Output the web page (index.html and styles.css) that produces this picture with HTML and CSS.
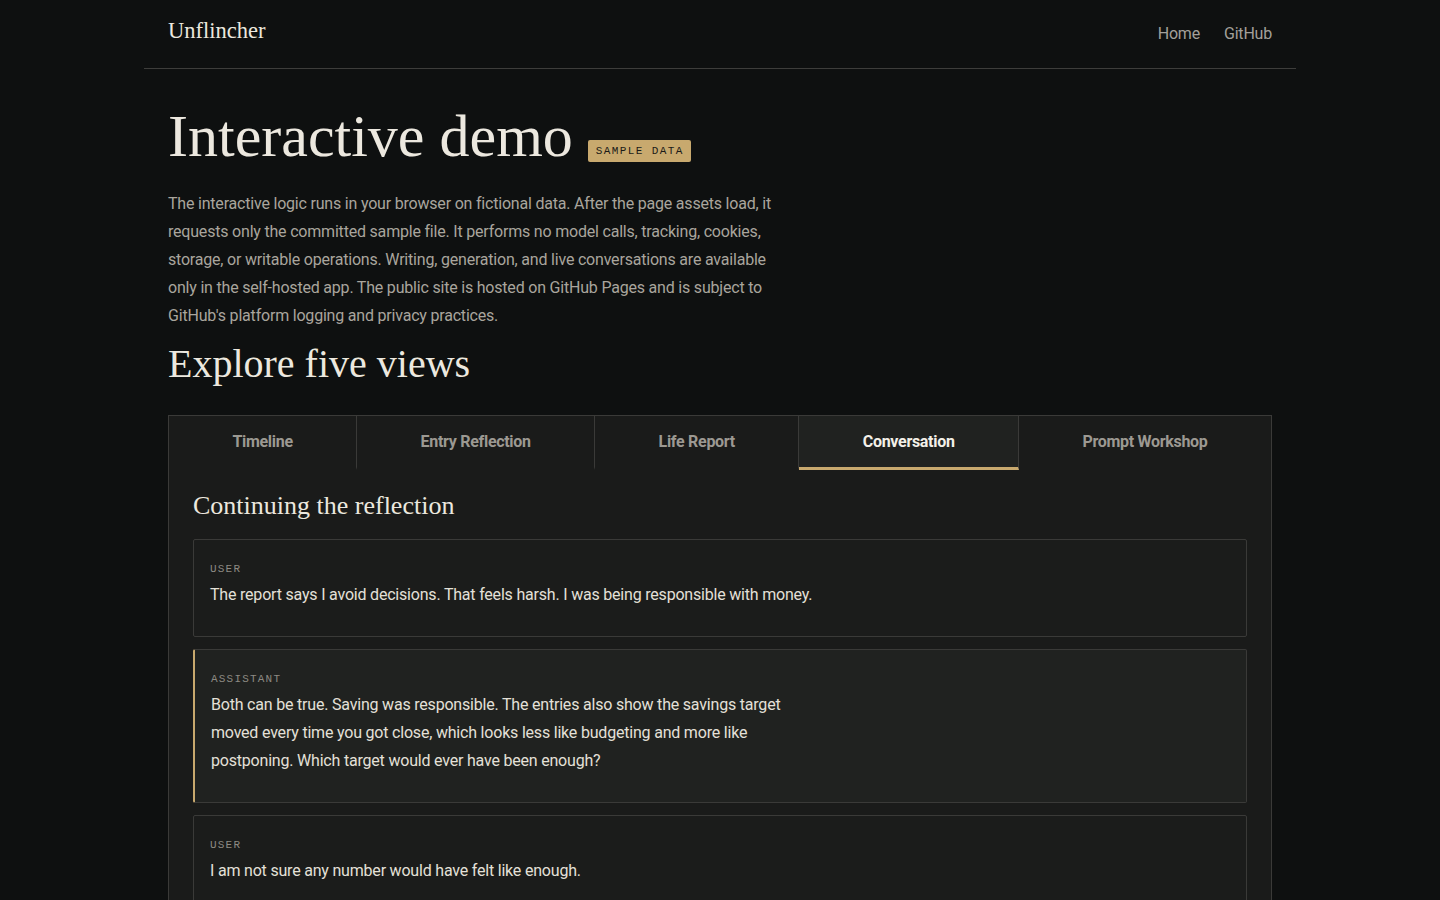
FILE: index.html
```html
<!DOCTYPE html>
<html lang="en">
<head>
  <meta charset="UTF-8">
  <meta name="viewport" content="width=device-width, initial-scale=1.0">
  <title>Interactive demo · Unflincher</title>
  <link rel="stylesheet" href="styles.css">
</head>
<body>
  <div class="container">
    <header class="site-header">
      <a class="brand" href="#">Unflincher</a>
      <nav class="nav">
        <a href="#">Home</a>
        <a href="#">GitHub</a>
      </nav>
    </header>

    <main class="main">
      <div class="title-row">
        <h1>Interactive demo</h1>
        <span class="badge">SAMPLE DATA</span>
      </div>
      <p class="intro">
        The interactive logic runs in your browser on fictional data. After the page assets load, it
        requests only the committed sample file. It performs no model calls, tracking, cookies,
        storage, or writable operations. Writing, generation, and live conversations are available
        only in the self-hosted app. The public site is hosted on GitHub Pages and is subject to
        GitHub's platform logging and privacy practices.
      </p>

      <h2>Explore five views</h2>

      <div class="demo">
        <div class="tabs">
          <button class="tab">Timeline</button>
          <button class="tab">Entry Reflection</button>
          <button class="tab">Life Report</button>
          <button class="tab active">Conversation</button>
          <button class="tab">Prompt Workshop</button>
        </div>

        <div class="panel">
          <h3>Continuing the reflection</h3>
          <div class="messages">
            <div class="message">
              <span class="role">USER</span>
              <p>The report says I avoid decisions. That feels harsh. I was being responsible with money.</p>
            </div>
            <div class="message assistant">
              <span class="role">ASSISTANT</span>
              <p>Both can be true. Saving was responsible. The entries also show the savings target moved every time you got close, which looks less like budgeting and more like postponing. Which target would ever have been enough?</p>
            </div>
            <div class="message">
              <span class="role">USER</span>
              <p>I am not sure any number would have felt like enough.</p>
            </div>
          </div>
        </div>
      </div>
    </main>
  </div>
</body>
</html>
```

FILE: styles.css
```css
* {
  margin: 0;
  padding: 0;
  box-sizing: border-box;
}

body {
  font-family: Roboto, 'Noto Sans', sans-serif;
  font-size: 16px;
  letter-spacing: -0.2px;
  background: #0e1010;
  color: #e6e2d9;
  min-height: 100vh;
}

a {
  color: inherit;
  text-decoration: none;
}

.container {
  max-width: 1152px;
  margin: 0 auto;
}

.site-header {
  display: flex;
  justify-content: space-between;
  align-items: flex-start;
  padding: 18px 24px 0;
  height: 69px;
  border-bottom: 1px solid #3d3d3b;
}

.brand {
  font-family: 'Liberation Serif', serif;
  font-size: 22.5px;
  letter-spacing: 0;
  color: #ece8df;
}

.nav {
  display: flex;
  gap: 24px;
  padding-top: 6px;
}

.nav a {
  color: #a3a09a;
  font-size: 16px;
}

.main {
  padding: 34px 24px 40px;
}

.title-row {
  display: flex;
  align-items: baseline;
  gap: 15px;
}

h1 {
  font-family: 'Liberation Serif', serif;
  font-size: 60px;
  font-weight: 400;
  line-height: 1.1;
  letter-spacing: 0;
  color: #ece8df;
}

.badge {
  font-family: 'Liberation Mono', monospace;
  font-size: 11px;
  letter-spacing: 1.4px;
  background: #c8a96e;
  color: #1a1a18;
  padding: 5px 7px 5px 8px;
  border-radius: 2px;
  position: relative;
  top: -2px;
}

.intro {
  max-width: 612px;
  margin: 21px 0 10px;
  line-height: 28px;
  color: #a9a59d;
}

h2 {
  font-family: 'Liberation Serif', serif;
  font-size: 40px;
  font-weight: 400;
  line-height: 48px;
  letter-spacing: 0;
  color: #ece8df;
  margin-bottom: 27px;
}

.demo {
  border: 1px solid #3a3a38;
  background: #1a1b1a;
}

.tabs {
  display: flex;
  border-bottom: 1px solid #3a3a38;
}

.tab {
  flex: 1 1 auto;
  font-family: inherit;
  font-size: 16px;
  font-weight: 700;
  letter-spacing: -0.3px;
  line-height: 20px;
  padding: 16px 16px 15px;
  background: #1a1b1a;
  color: #9c9992;
  border: none;
  border-right: 1px solid #3a3a38;
  border-bottom: 3px solid transparent;
  margin-bottom: -1px;
  cursor: pointer;
}

.tab:last-child {
  border-right: none;
}

.tab.active {
  background: #202220;
  color: #f3f0e8;
  border-bottom-color: #c8a96e;
}

.panel {
  padding: 20px 24px 24px;
}

h3 {
  font-family: 'Liberation Serif', serif;
  font-size: 26px;
  font-weight: 400;
  line-height: 32px;
  letter-spacing: 0;
  color: #ece8df;
  margin-bottom: 17px;
}

.messages {
  display: flex;
  flex-direction: column;
  gap: 12px;
}

.message {
  border: 1px solid #3a3a38;
  border-radius: 2px;
  background: #1b1c1b;
  padding: 21px 16px 11px;
}

.message.assistant {
  background: #202220;
  border-left: 2px solid #c8a96e;
}

.role {
  display: block;
  font-family: 'Liberation Mono', monospace;
  font-size: 11px;
  line-height: 16px;
  letter-spacing: 1.2px;
  color: #8d8a83;
  margin-bottom: 4px;
}

.message p {
  max-width: 610px;
  line-height: 28px;
  color: #e4e0d8;
  margin-bottom: 16px;
}
```
